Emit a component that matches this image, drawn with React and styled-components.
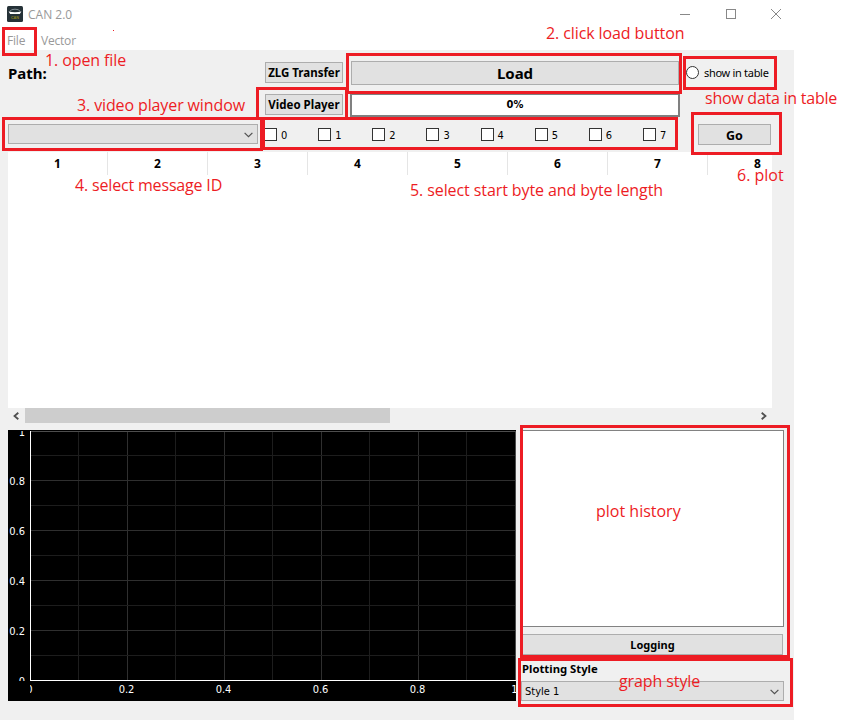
import React from "react";
import styled, { createGlobalStyle } from "styled-components";

const Global = createGlobalStyle`
  * { box-sizing: border-box; }
  body { margin: 0; background: #fff; overflow: hidden; }
`;

const uiFont = `"DejaVu Sans Condensed", "Noto Sans", sans-serif`;
const boldFont = `"Noto Sans", "Open Sans", sans-serif`;

const Page = styled.div`
  position: relative;
  width: 860px;
  height: 720px;
  overflow: hidden;
  background: #fff;
  color: #000;
  font: 11px ${boldFont};
  white-space: nowrap;
`;
const Window = styled.div`
  width: 794px;
  height: 720px;
  display: flex;
  flex-direction: column;
  background: #fff;
`;
const TitleBar = styled.header`
  height: 28px;
  display: flex;
  align-items: center;
  padding: 0 13px 0 7px;
  color: #999;
`;
const Title = styled.span`
  flex: 1;
  margin-left: 5px;
  font: 12px "Open Sans", sans-serif;
`;
const WindowButtons = styled.div`
  display: flex;
  gap: 35.5px;
`;
const MenuBar = styled.nav`
  height: 22px;
  display: flex;
  gap: 15px;
  padding: 4px 7px 0;
  align-items: center;
  color: #999;
  font: 12px/18px "Open Sans", sans-serif;
`;
const MenuItem = styled.span`
  width: ${(p) => p.$width}px;
  letter-spacing: -0.2px;
`;
const Body = styled.main`
  flex: 1;
  padding: 7px 10px 0 8px;
  background: #f0f0f0;
`;
const Row = styled.div`
  display: flex;
  align-items: center;
  height: 32px;
`;
const SelectRow = styled(Row)`
  height: 31px;
  align-items: flex-start;
  padding-top: 3px;
`;
const PathLabel = styled.div`
  width: 257px;
  font: bold 15px/20px ${boldFont};
`;
const Button = styled.button`
  width: ${(p) => p.$width}px;
  height: ${(p) => p.$height || 21}px;
  flex: none;
  display: flex;
  align-items: center;
  justify-content: center;
  margin: ${(p) => p.$margin || "0"};
  padding: ${(p) => p.$drop || 0}px 0 0;
  border: 1px solid #adadad;
  background: #e1e1e1;
  color: #000;
  font: bold ${(p) => p.$size || 11.5}px ${boldFont};
`;
const Progress = styled.div`
  width: 330px;
  height: 24px;
  margin-left: 7px;
  border: 2px solid #808080;
  background: #fff;
  text-align: center;
  font: bold 11px/20px "DejaVu Sans Condensed", sans-serif;
`;
const RadioLabel = styled.label`
  display: flex;
  align-items: center;
  gap: 5px;
  margin: 0 0 1px 7px;
  font: 11px/13px ${boldFont};
  letter-spacing: -0.3px;
`;
const RadioDot = styled.span`
  width: 13px;
  height: 13px;
  border: 1px solid #333;
  border-radius: 50%;
  background: #fff;
`;
const Combo = styled.div`
  width: ${(p) => p.$width}px;
  height: ${(p) => p.$height}px;
  flex: none;
  display: flex;
  align-items: center;
  justify-content: space-between;
  padding: 1px 4px 0 3px;
  border: 1px solid #adadad;
  background: #e1e1e1;
  font: 11px ${uiFont};
`;
const Bytes = styled.div`
  display: grid;
  grid-template-columns: repeat(8, 54.14px);
  width: 434px;
  margin: 4px 0 0 6px;
`;
const ByteOption = styled.label`
  display: flex;
  gap: 4px;
  font: 11px/15px ${uiFont};
`;
const CheckBox = styled.span`
  width: 13px;
  height: 13px;
  border: 1px solid #333;
  background: #fff;
`;
const Table = styled.section`
  width: 764px;
  height: 256px;
  overflow: hidden;
  background: #fff;
`;
const HeaderRow = styled.div`
  display: grid;
  grid-template-columns: repeat(8, 100px);
  height: 23px;
`;
const HeaderCell = styled.div`
  border-right: 1px solid #e5e5e5;
  text-align: center;
  font: bold 12px/23px ${boldFont};
`;
const ScrollBar = styled.div`
  width: 764px;
  height: 15px;
  display: flex;
  align-items: center;
  justify-content: space-between;
`;
const ScrollTrack = styled.div`
  flex: 1;
  height: 15px;
`;
const ScrollThumb = styled.div`
  width: 365px;
  height: 15px;
  background: #cdcdcd;
`;
const ArrowBox = styled.span`
  width: 17px;
  height: 15px;
  display: flex;
  align-items: center;
  justify-content: center;
`;
const Lower = styled.div`
  display: flex;
  gap: 5px;
  margin-top: 7px;
`;
const Side = styled.aside`
  width: 263px;
  display: flex;
  flex-direction: column;
`;
const History = styled.div`
  height: 197px;
  border: 1px solid #828282;
  background: #fff;
`;
const StyleLabel = styled.div`
  height: 26px;
  padding-left: 1px;
  font: bold 11.3px/28px ${boldFont};
`;
const Callout = styled.div`
  position: absolute;
  left: ${(p) => p.$x}px;
  top: ${(p) => p.$y}px;
  width: ${(p) => p.$w}px;
  height: ${(p) => p.$h}px;
  border: 3px solid #ed1c24;
`;
const Note = styled.div`
  position: absolute;
  left: ${(p) => p.$x}px;
  top: ${(p) => p.$y}px;
  color: #ed1c24;
  font: 16px/20px "Open Sans", sans-serif;
  letter-spacing: ${(p) => p.$spacing || 0}px;
`;
const RedDot = styled.div`
  position: absolute;
  left: 113px;
  top: 30px;
  width: 1px;
  height: 1px;
  background: #ed1c24;
`;

const Chevron = () => (
  <svg width="9" height="6" viewBox="0 0 9 6" fill="none" stroke="#505050" strokeWidth="1.2">
    <path d="M0.6 0.8L4.5 4.7L8.4 0.8" />
  </svg>
);
const ScrollArrow = ({ d }) => (
  <svg width="7" height="8" viewBox="0 0 7 8" fill="none" stroke="#505050" strokeWidth="1.8">
    <path d={d} />
  </svg>
);
const AppIcon = () => (
  <svg width="16" height="16" viewBox="0 0 16 16">
    <rect width="16" height="16" rx="1.5" fill="#263238" />
    <path d="M3 5.3Q3.6 3.2 8 3.2T13 5.3" fill="none" stroke="#8b979d" strokeWidth="0.9" />
    <path d="M1.6 5.4Q8 7 14.4 5.4L12.8 7.9H3.2Z" fill="#fff" />
    <text x="8" y="13" textAnchor="middle" fontSize="3.8" fontWeight="bold" fontFamily="Liberation Sans" fill="#8d8420">CAN</text>
  </svg>
);

const gridX = [78, 127, 175, 224, 272, 321, 369, 418, 466].map((x) => x - 8);
const gridY = [455, 480, 505, 530, 555, 580, 605, 630, 655].map((y) => y - 430);

const Plot = () => (
  <svg width="508" height="271" viewBox="0 0 508 271" shapeRendering="crispEdges">
    <defs>
      <clipPath id="yAxis"><rect x="0" y="1" width="22" height="250" /></clipPath>
      <clipPath id="xAxis"><rect x="22" y="251" width="486" height="20" /></clipPath>
    </defs>
    <rect width="508" height="271" fill="#000" />
    {gridX.map((x, i) => (
      <rect key={x} x={x} y="1" width="1" height="249" fill={i % 2 ? "#2f2f2f" : "#1d1d1d"} />
    ))}
    {gridY.map((y, i) => (
      <rect key={y} x="23" y={y} width="485" height="1" fill={i % 2 ? "#2f2f2f" : "#1d1d1d"} />
    ))}
    <rect x="23" y="1" width="485" height="1" fill="#4d4d4d" />
    <rect x="507" y="1" width="1" height="249" fill="#4d4d4d" />
    <rect x="22" y="1" width="1" height="250" fill="#fff" />
    <rect x="22" y="250" width="486" height="1" fill="#fff" />
    <g fill="#fff" fontFamily="DejaVu Sans Condensed" fontSize="11">
      <g clipPath="url(#yAxis)" textAnchor="end">
        {["1", "0.8", "0.6", "0.4", "0.2", "0"].map((t, i) => (
          <text key={t} x="17" y={i === 0 ? 6 : 5 + i * 50}>{t}</text>
        ))}
      </g>
      <g clipPath="url(#xAxis)" textAnchor="middle">
        {["0", "0.2", "0.4", "0.6", "0.8", "1"].map((t, i) => (
          <text key={t} x={21.5 + i * 97} y="263">{t}</text>
        ))}
      </g>
    </g>
  </svg>
);

const callouts = [
  [2, 27, 35, 29],
  [346, 53, 336, 41],
  [256, 87, 92, 33],
  [262, 117, 416, 33],
  [2, 117, 261, 34],
  [683, 56, 94, 34],
  [691, 112, 91, 43],
  [520, 425, 270, 233],
  [518, 658, 275, 49],
];
const notes = [
  [45, 50, "1. open file", -0.1],
  [546, 23, "2. click load button", -0.1],
  [77, 95, "3. video player window", -0.12],
  [75, 175, "4. select message ID", -0.17],
  [410, 180, "5. select start byte and byte length", -0.09],
  [737, 165, "6. plot", 0],
  [705, 88, "show data in table", -0.25],
  [596, 501, "plot history", 0],
  [619, 671, "graph style", -0.1],
];

export default function App() {
  return (
    <Page>
      <Global />
      <Window>
        <TitleBar>
          <AppIcon />
          <Title>CAN 2.0</Title>
          <WindowButtons>
            <svg width="10" height="10"><path d="M0 5.5H10" stroke="#888" /></svg>
            <svg width="10" height="10"><rect x="0.5" y="0.5" width="9" height="9" fill="none" stroke="#888" /></svg>
            <svg width="10" height="10"><path d="M0 0L10 10M10 0L0 10" stroke="#888" /></svg>
          </WindowButtons>
        </TitleBar>
        <MenuBar>
          <MenuItem $width={19}>File</MenuItem>
          <MenuItem $width={34}>Vector</MenuItem>
        </MenuBar>
        <Body>
          <Row>
            <PathLabel>Path:</PathLabel>
            <Button $width={78} $margin="0 0 1px">ZLG Transfer</Button>
            <Button $width={328} $height={24} $size={15} $margin="0 0 0 8px">Load</Button>
            <RadioLabel><RadioDot />show in table</RadioLabel>
          </Row>
          <Row>
            <Button $width={78} $margin="0 0 1px 257px">Video Player</Button>
            <Progress>0%</Progress>
          </Row>
          <SelectRow>
            <Combo $width={250} $height={20}><span /><Chevron /></Combo>
            <Bytes>
              {[0, 1, 2, 3, 4, 5, 6, 7].map((n) => (
                <ByteOption key={n}><CheckBox />{n}</ByteOption>
              ))}
            </Bytes>
            <Button $width={73} $size={12.5} $drop={2}>Go</Button>
          </SelectRow>
          <Table>
            <HeaderRow>
              {[1, 2, 3, 4, 5, 6, 7, 8].map((n) => <HeaderCell key={n}>{n}</HeaderCell>)}
            </HeaderRow>
          </Table>
          <ScrollBar>
            <ArrowBox><ScrollArrow d="M5.3 0.7L1.5 4L5.3 7.3" /></ArrowBox>
            <ScrollTrack><ScrollThumb /></ScrollTrack>
            <ArrowBox><ScrollArrow d="M1.7 0.7L5.5 4L1.7 7.3" /></ArrowBox>
          </ScrollBar>
          <Lower>
            <Plot />
            <Side>
              <History />
              <Button $width={261} $size={11} $margin="7px 0 0 1px">Logging</Button>
              <StyleLabel>Plotting Style</StyleLabel>
              <Combo $width={263} $height={20}>Style 1<Chevron /></Combo>
            </Side>
          </Lower>
        </Body>
      </Window>
      {callouts.map(([x, y, w, h]) => <Callout key={`${x}-${y}`} $x={x} $y={y} $w={w} $h={h} />)}
      {notes.map(([x, y, text, spacing]) => <Note key={text} $x={x} $y={y} $spacing={spacing}>{text}</Note>)}
      <RedDot />
    </Page>
  );
}
